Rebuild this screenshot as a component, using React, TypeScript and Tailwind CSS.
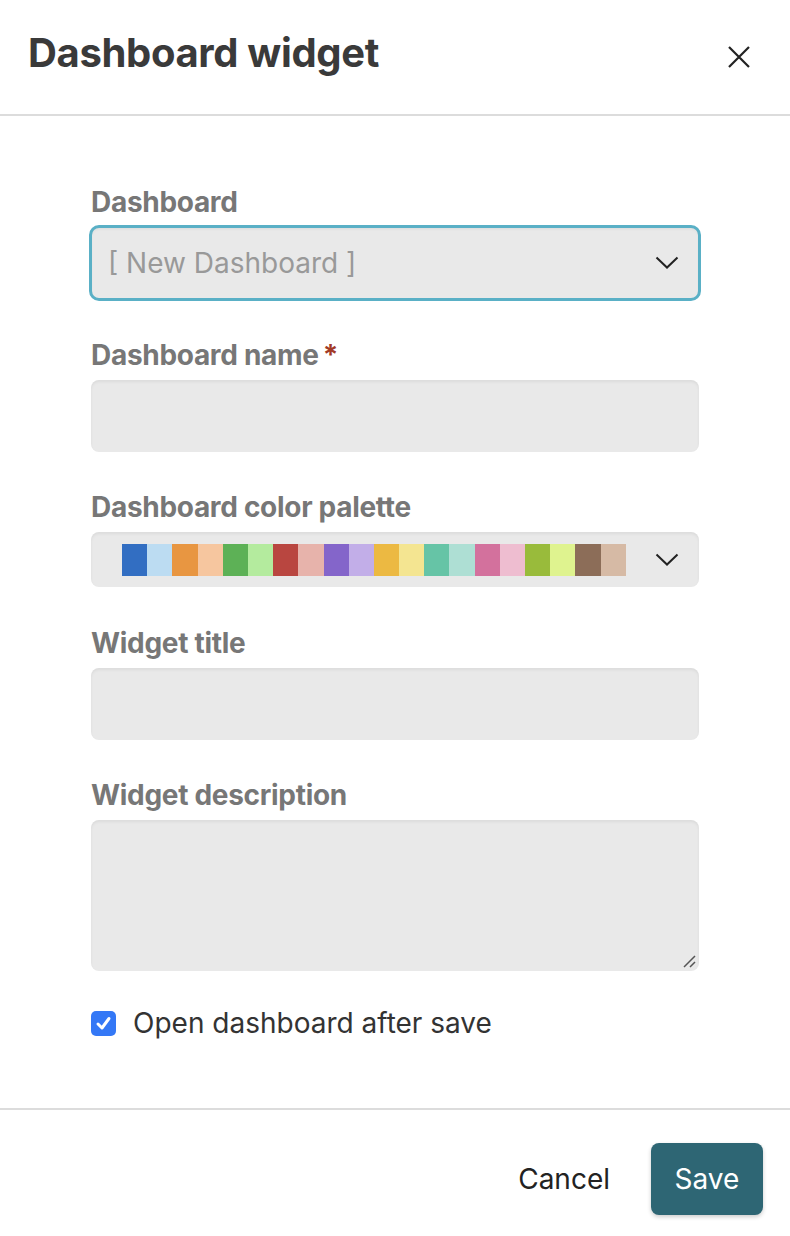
import React from "react";

const palette = [
  "#326ec2",
  "#bcdcf2",
  "#e89641",
  "#f6c69f",
  "#5db156",
  "#b4eb9e",
  "#b94640",
  "#e7b3ab",
  "#8465ca",
  "#c2aee8",
  "#ecb942",
  "#f4e591",
  "#66c4a6",
  "#aedfd4",
  "#d3719d",
  "#eebdd0",
  "#99bb3b",
  "#dff38f",
  "#8c6d58",
  "#d6baa5",
];

function Chevron() {
  return (
    <svg width="24" height="14" viewBox="0 0 24 14" fill="none">
      <path d="M1.5 1.5 L12 11.5 L22.5 1.5" stroke="#222" strokeWidth="2" />
    </svg>
  );
}

function Label({ children, required }: { children: React.ReactNode; required?: boolean }) {
  return (
    <div className="h-[39px] mb-[11px] flex items-end text-[28px] font-bold text-[#777] leading-none tracking-[-0.3px]">
      {children}
      {required && <span className="ml-[4px] text-[#a33a26]">*</span>}
    </div>
  );
}

const field =
  "w-full rounded-[8px] bg-[#e9e9e9] shadow-[inset_0_2px_3px_rgba(0,0,0,0.06)]";

export default function App() {
  return (
    <div className="w-[790px] h-[1236px] bg-white flex flex-col font-['Inter',sans-serif]">
      {/* header */}
      <div className="h-[116px] shrink-0 flex items-center justify-between pl-[28px] pr-[38px] border-b-2 border-[#dcdcdc]">
        <h1 className="text-[40px] font-bold text-[#3a3a3a] tracking-[-0.35px] pb-[9px]">
          Dashboard widget
        </h1>
        <button className="w-[26px] h-[26px] flex items-center justify-center">
          <svg width="24" height="24" viewBox="0 0 24 24" fill="none">
            <path d="M2 2 L22 22 M22 2 L2 22" stroke="#222" strokeWidth="2.2" />
          </svg>
        </button>
      </div>

      {/* body */}
      <div className="flex-1 px-[91px] pt-[61px] flex flex-col">
        <Label>Dashboard</Label>
        <div
          className={`${field} h-[72px] outline-3 outline-[#5ab0c6] outline-offset-[-1px] flex items-center justify-between pl-[17px] pr-[20px]`}
        >
          <span className="text-[28px] text-[#999]">[ New Dashboard ]</span>
          <Chevron />
        </div>

        <div className="mt-[31px]">
          <Label required>Dashboard name</Label>
          <div className={`${field} h-[72px]`} />
        </div>

        <div className="mt-[30px]">
          <Label>Dashboard color palette</Label>
          <div className={`${field} h-[55px] flex items-center justify-between pl-[31px] pr-[20px]`}>
            <div className="flex">
              {palette.map((c) => (
                <div key={c} className="w-[25.2px] h-[32px]" style={{ backgroundColor: c }} />
              ))}
            </div>
            <Chevron />
          </div>
        </div>

        <div className="mt-[31px]">
          <Label>Widget title</Label>
          <div className={`${field} h-[72px]`} />
        </div>

        <div className="mt-[30px]">
          <Label>Widget description</Label>
          <div className={`${field} h-[151px] relative`}>
            <svg
              className="absolute right-[2px] bottom-[2px]"
              width="16"
              height="16"
              viewBox="0 0 16 16"
              fill="none"
            >
              <path d="M14 3 L3 14 M14 9 L9 14" stroke="#555" strokeWidth="1.5" />
            </svg>
          </div>
        </div>

        <label className="mt-[31px] flex items-center gap-[17px]">
          <span className="w-[25px] h-[25px] rounded-[5px] bg-[#3478f6] flex items-center justify-center">
            <svg width="17" height="17" viewBox="0 0 17 17" fill="none">
              <path
                d="M3 9 L7 13 L14 3.5"
                stroke="white"
                strokeWidth="3"
                strokeLinecap="round"
                strokeLinejoin="round"
              />
            </svg>
          </span>
          <span className="text-[28px] text-[#333]">Open dashboard after save</span>
        </label>
      </div>

      {/* footer */}
      <div className="h-[128px] shrink-0 border-t-2 border-[#dcdcdc] flex items-start justify-end gap-[41px] pr-[27px] pt-[33px]">
        <button className="h-[72px] text-[28px] text-[#222]">Cancel</button>
        <button className="h-[72px] w-[112px] rounded-[8px] bg-[#2e6674] text-white text-[28px] shadow-[0_2px_4px_rgba(0,0,0,0.2)]">
          Save
        </button>
      </div>
    </div>
  );
}
